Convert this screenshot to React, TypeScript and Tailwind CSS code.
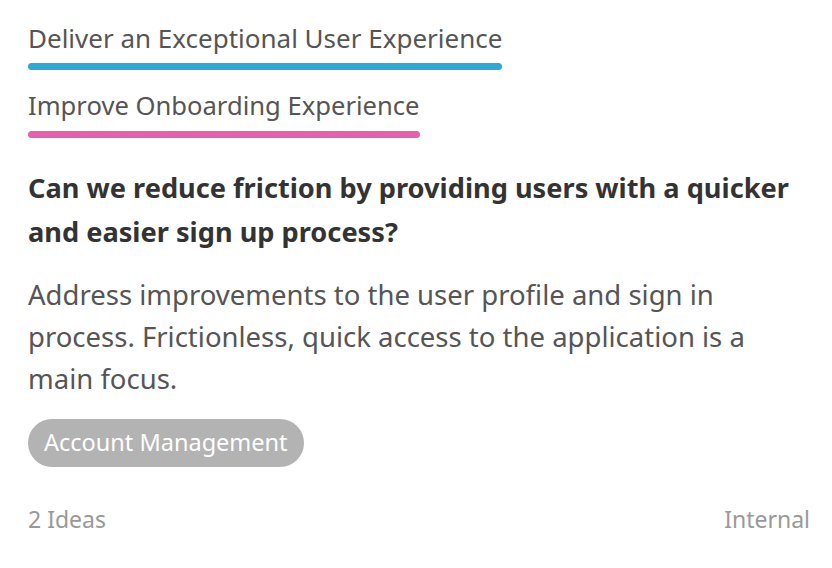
export default function App() {
  return (
    <div className="min-h-screen bg-white pl-[28px] pr-[22px] pt-[22px] font-['Noto_Sans',sans-serif]">
      {/* Goal and initiative links */}
      <div className="inline-flex flex-col">
        <span className="text-[26px] leading-[32px] text-[#555555]">
          Deliver an Exceptional User Experience
        </span>
        <div className="mt-[9px] h-[7px] rounded-full bg-[#2ea8d6]" />
      </div>
      <div className="mt-[20px]">
        <div className="inline-flex flex-col">
          <span className="text-[25.6px] leading-[32px] text-[#555555]">
            Improve Onboarding Experience
          </span>
          <div className="mt-[9px] h-[7px] rounded-full bg-[#e85fab]" />
        </div>
      </div>

      {/* Question */}
      <h2 className="mt-[28px] text-[27.2px] font-bold leading-[44px] text-[#333333]">
        Can we reduce friction by providing users with a quicker and easier sign up process?
      </h2>

      {/* Description */}
      <p className="mt-[20px] text-[27.5px] leading-[42px] text-[#555555]">
        Address improvements to the user profile and sign in process. Frictionless, quick access to
        the application is a main focus.
      </p>

      {/* Tag */}
      <div className="mt-[19px]">
        <span className="inline-flex h-[48px] items-center rounded-full bg-[#b3b3b3] px-[16px] text-[23.5px] text-white">
          Account Management
        </span>
      </div>

      {/* Footer */}
      <div className="mt-[37px] flex items-center justify-between text-[23px] leading-[30px] text-[#999999]">
        <span>2 Ideas</span>
        <span>Internal</span>
      </div>
    </div>
  );
}
